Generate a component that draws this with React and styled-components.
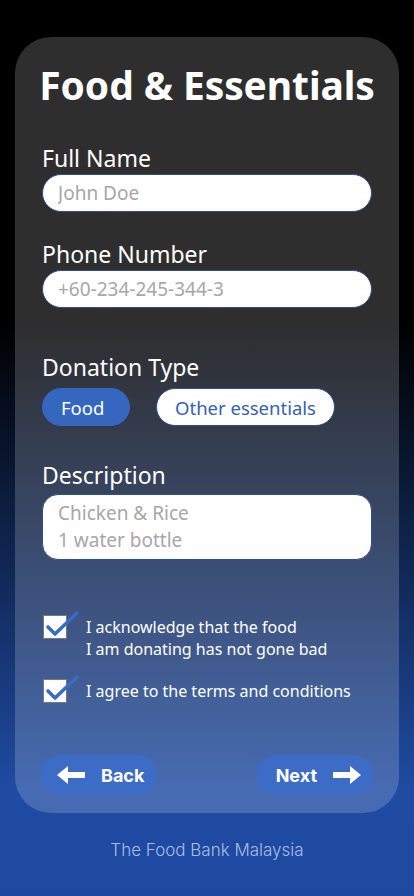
import React from "react";
import styled, { createGlobalStyle } from "styled-components";

const GlobalStyle = createGlobalStyle`
  html, body {
    margin: 0;
    padding: 0;
  }

  body {
    min-height: 896px;
    background: linear-gradient(to bottom, #000 36%, #1f4ba2 88%, #1d4aa0 100%);
    font-family: "Noto Sans", "Open Sans", sans-serif;
  }
`;

const ArrowIcon = ({ flip }) => (
  <svg
    width="28"
    height="18"
    viewBox="0 0 28 18"
    style={flip ? { transform: "scaleX(-1)" } : undefined}
  >
    <path d="M0 9 L11 0 L11 6 L28 6 L28 12 L11 12 L11 18 Z" fill="#fff" />
  </svg>
);

const CheckBox = () => (
  <Box>
    <CheckMark width="40" height="30" viewBox="0 0 40 30">
      <path
        d="M5 18 L12 25 L34 4"
        fill="none"
        stroke="#3a6bc8"
        strokeWidth="3.6"
        strokeLinecap="round"
        strokeLinejoin="round"
      />
    </CheckMark>
  </Box>
);

const App = () => {
  return (
    <>
      <GlobalStyle />
      <Page>
        <Card>
          <Title>Food &amp; Essentials</Title>

          <Field $gap="35px">
            <Label>Full Name</Label>
            <Input placeholder="John Doe" />
          </Field>

          <Field $gap="28px">
            <Label>Phone Number</Label>
            <Input placeholder="+60-234-245-344-3" />
          </Field>

          <Field $gap="45px" $inner="7px">
            <Label>Donation Type</Label>
            <TypeRow>
              <TypeButton $active>Food</TypeButton>
              <TypeButton>Other essentials</TypeButton>
            </TypeRow>
          </Field>

          <Field $gap="35px" $inner="5px">
            <Label>Description</Label>
            <TextArea placeholder={"Chicken & Rice\n1 water bottle"} />
          </Field>

          <Checks>
            <CheckRow>
              <CheckBox />
              <CheckText>
                I acknowledge that the food
                <br />I am donating has not gone bad
              </CheckText>
            </CheckRow>
            <CheckRow>
              <CheckBox />
              <CheckText>I agree to the terms and conditions</CheckText>
            </CheckRow>
          </Checks>

          <NavRow>
            <NavButton $back>
              <ArrowIcon />
              Back
            </NavButton>
            <NavButton>
              Next
              <ArrowIcon flip />
            </NavButton>
          </NavRow>
        </Card>
        <Footer>The Food Bank Malaysia</Footer>
      </Page>
    </>
  );
};

export default App;

// Styled Components

const Page = styled.div`
  width: 414px;
  min-height: 896px;
  padding: 37px 15px 0;
  box-sizing: border-box;
  display: flex;
  flex-direction: column;
`;

const Card = styled.div`
  background-color: rgba(255, 255, 255, 0.18);
  border-radius: 36px;
  padding: 24px 27px 18px;
  display: flex;
  flex-direction: column;
  color: #fff;
`;

const Title = styled.h1`
  margin: 0 -10px;
  font-size: 39px;
  line-height: 48px;
  font-weight: 700;
  text-align: center;
  letter-spacing: -0.1px;
  white-space: nowrap;
`;

const Field = styled.div`
  display: flex;
  flex-direction: column;
  gap: ${(p) => p.$inner || "2px"};
  margin-top: ${(p) => p.$gap};
`;

const Label = styled.label`
  font-size: 23px;
  line-height: 28px;
  font-weight: 400;
`;

const Input = styled.input`
  height: 38px;
  box-sizing: border-box;
  border: 1px solid #2d4f90;
  border-radius: 19px;
  background: #fff;
  padding: 0 15px;
  font-family: inherit;
  font-size: 19px;
  color: #333;
  outline: none;

  &::placeholder {
    color: #a7a7a7;
  }
`;

const TextArea = styled.textarea`
  height: 66px;
  box-sizing: border-box;
  border: 1px solid #2d4f90;
  border-radius: 16px;
  background: #fff;
  padding: 5px 15px;
  font-family: inherit;
  font-size: 19px;
  line-height: 27px;
  color: #333;
  resize: none;
  outline: none;
  overflow: hidden;

  &::placeholder {
    color: #a7a7a7;
  }
`;

const TypeRow = styled.div`
  display: flex;
  gap: 26px;
`;

const TypeButton = styled.button`
  height: 38px;
  border-radius: 19px;
  padding: 0 18px;
  min-width: ${(p) => (p.$active ? "88px" : "176px")};
  font-family: inherit;
  font-size: 18.5px;
  border: 1px solid ${(p) => (p.$active ? "#3567c0" : "#2d4f90")};
  background-color: ${(p) => (p.$active ? "#3567c0" : "#fff")};
  color: ${(p) => (p.$active ? "#fff" : "#3462b6")};
  text-align: ${(p) => (p.$active ? "left" : "center")};
  cursor: pointer;
`;

const Checks = styled.div`
  margin-top: 55px;
  display: flex;
  flex-direction: column;
  gap: 19px;
`;

const CheckRow = styled.div`
  display: flex;
  align-items: flex-start;
  gap: 19px;
  padding-left: 1px;
`;

const Box = styled.div`
  position: relative;
  flex: none;
  width: 24px;
  height: 24px;
  box-sizing: border-box;
  background: #fff;
  border: 1.5px solid #6f7a8c;
`;

const CheckMark = styled.svg`
  position: absolute;
  left: -1px;
  top: -7px;
`;

const CheckText = styled.div`
  font-size: 16px;
  line-height: 22px;
  margin-top: 1px;
`;

const NavRow = styled.div`
  margin-top: 52px;
  display: flex;
  justify-content: space-between;
  margin-left: -2px;
  margin-right: -1px;
`;

const NavButton = styled.button`
  width: 117px;
  height: 40px;
  border: none;
  border-radius: 20px;
  background-color: #3d6cc6;
  color: #fff;
  font-family: "Inter", "Noto Sans", sans-serif;
  font-size: 18px;
  font-weight: 700;
  display: flex;
  align-items: center;
  justify-content: ${(p) => (p.$back ? "flex-start" : "flex-end")};
  gap: 16px;
  padding: 0 12px 0 17px;
  cursor: pointer;
`;

const Footer = styled.div`
  text-align: center;
  margin-top: 27px;
  font-family: "Inter", "Lato", sans-serif;
  font-weight: 300;
  font-size: 17px;
  color: #a9bde6;
`;
